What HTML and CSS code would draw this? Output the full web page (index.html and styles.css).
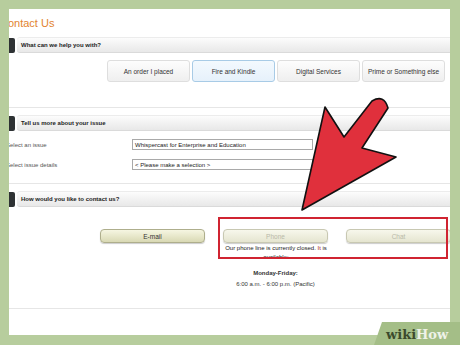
FILE: index.html
```html
<!DOCTYPE html>
<html lang="en">
<head>
    <meta charset="UTF-8">
    <title>Contact Us</title>
    <link rel="stylesheet" href="styles.css">
</head>
<body>
    <div class="page">
        <div class="panel">
            <h1 class="title">Contact Us</h1>

            <!-- Step 1 -->
            <section class="section">
                <div class="section-head"><span class="tab"></span><h2>What can we help you with?</h2></div>
                <div class="topics">
                    <button class="topic">An order I placed</button>
                    <button class="topic selected">Fire and Kindle</button>
                    <button class="topic">Digital Services</button>
                    <button class="topic">Prime or Something else</button>
                </div>
            </section>

            <!-- Step 2 -->
            <section class="section">
                <div class="section-head"><span class="tab"></span><h2>Tell us more about your issue</h2></div>
                <div class="issue-form">
                    <label>Select an issue</label>
                    <div class="select">Whispercast for Enterprise and Education</div>
                    <label>Select issue details</label>
                    <div class="select">&lt; Please make a selection &gt;</div>
                </div>
            </section>

            <!-- Step 3 -->
            <section class="section last">
                <div class="section-head"><span class="tab"></span><h2>How would you like to contact us?</h2></div>
                <div class="contact-options">
                    <div class="option">
                        <button class="contact-btn">E-mail</button>
                    </div>
                    <div class="option">
                        <button class="contact-btn disabled">Phone</button>
                        <p class="note">Our phone line is currently closed. <span class="hl">It</span> is available:</p>
                        <p class="hours"><strong>Monday-Friday:</strong><br>6:00 a.m. - 6:00 p.m. (Pacific)</p>
                    </div>
                    <div class="option">
                        <button class="contact-btn disabled">Chat</button>
                    </div>
                </div>
            </section>
        </div>

        <!-- annotation overlays -->
        <div class="callout"></div>
        <svg class="arrow" width="460" height="345" viewBox="0 0 460 345" aria-hidden="true">
            <path d="M302 210 L325 107 L344 137 L372 101 Q384 94 388 108 L362 148 L396 157 Z" fill="#e0303c" stroke="#111" stroke-width="1.6" stroke-linejoin="round"></path>
        </svg>

        <div class="wikihow">
            <svg class="wikihow-tab" width="86" height="23" viewBox="0 0 86 23" aria-hidden="true">
                <path d="M0 23 L8 0 L86 0 L86 23 Z" fill="#a4be87"></path>
            </svg>
            <span class="wiki">wiki</span><span class="how">How</span>
        </div>
    </div>
</body>
</html>
```

FILE: styles.css
```css
/* Page */
body {
    margin: 0;
    width: 460px;
    height: 345px;
    overflow: hidden;
    background-color: #b7cd9d;
    font-family: "Liberation Sans", Arial, sans-serif;
    color: #333;
}

.page {
    position: relative;
    width: 460px;
    height: 345px;
    padding: 9px 10px 0 9px;
    box-sizing: border-box;
}

/* White panel (cropped on the left) */
.panel {
    height: 326px;
    background-color: #ffffff;
    overflow: hidden;
}

.title {
    margin: 8px 0 0 -9px;
    height: 13px;
    font-size: 11px;
    line-height: 13px;
    font-weight: normal;
    color: #e2832f;
}

/* Sections */
.section {
    border-bottom: 1px solid #e6e6e6;
}

.section-head {
    display: flex;
    height: 16px;
    margin-top: 7px;
}

.tab {
    width: 6px;
    margin-top: 1px;
    background-color: #2e3234;
    border-radius: 0 2px 2px 0;
}

.section-head h2 {
    flex: 1;
    margin: 0 0 0 2px;
    padding-left: 4px;
    font-size: 6px;
    line-height: 14px;
    font-weight: bold;
    color: #222;
    background: linear-gradient(#fcfcfc, #e8e8e8);
    border-top: 1px solid #ececec;
    border-bottom: 1px solid #dadada;
    border-radius: 3px 0 0 3px;
}

/* Step 1 buttons */
.topics {
    display: flex;
    justify-content: flex-end;
    gap: 2px;
    margin-top: 7px;
    padding: 0 5px 25px 0;
}

.topic {
    width: 83px;
    height: 22px;
    padding: 0;
    font-family: inherit;
    font-size: 6.5px;
    color: #333;
    background: linear-gradient(#fdfdfd, #efefef);
    border: 1px solid #dedede;
    border-radius: 3px;
}

.topic.selected {
    background: linear-gradient(#f3f9fe, #e6f1fb);
    border-color: #a8cbe6;
}

/* Step 2 form */
.issue-form {
    display: grid;
    grid-template-columns: 126px 181px;
    row-gap: 9px;
    align-items: center;
    margin: 8px 0 0 -3px;
    padding-bottom: 13px;
}

.issue-form label {
    font-size: 6px;
    color: #555;
}

.select {
    height: 11px;
    padding-left: 2px;
    font-size: 6px;
    line-height: 10px;
    color: #222;
    border: 1px solid #a9a9a9;
    box-sizing: border-box;
    white-space: nowrap;
    overflow: hidden;
}

/* Step 3 contact options */
.contact-options {
    display: flex;
    gap: 18px;
    margin-top: 22px;
    padding: 0 0 18px 91px;
}

.option {
    width: 105px;
    flex-shrink: 0;
    text-align: center;
}

.contact-btn {
    display: block;
    width: 105px;
    height: 14px;
    padding: 0;
    font-family: inherit;
    font-size: 6.5px;
    color: #333;
    background: linear-gradient(#f6f6e2, #d9d9b4);
    border: 1px solid #aeae8c;
    border-radius: 4px;
    box-shadow: 0 1px 1px rgba(0, 0, 0, 0.2);
}

.contact-btn.disabled {
    color: #b9b9a8;
    background: linear-gradient(#f7f7ec, #e5e5d0);
    border-color: #c8c8b2;
}

.note {
    width: 112px;
    margin: 1px 0 0 -3px;
    font-size: 6px;
    line-height: 9px;
    color: #222;
}

.hl {
    color: #a4161f;
}

.hours {
    margin: 6px -20px 0;
    font-size: 6px;
    line-height: 11px;
    color: #333;
}

/* Annotation overlays */
.callout {
    position: absolute;
    left: 218px;
    top: 217px;
    width: 230px;
    height: 42px;
    border: 2px solid #d02431;
    box-sizing: border-box;
}

.arrow {
    position: absolute;
    left: 0;
    top: 0;
}

/* Watermark */
.wikihow {
    position: absolute;
    right: 0;
    bottom: 0;
    z-index: 0;
    width: 86px;
    height: 23px;
    display: flex;
    align-items: flex-end;
    padding: 0 0 2px 12px;
    box-sizing: border-box;
    font-family: "DejaVu Serif", serif;
    font-weight: bold;
    font-size: 13px;
    line-height: 16px;
}

.wikihow-tab {
    position: absolute;
    left: 0;
    top: 0;
    z-index: -1;
}

.wiki {
    color: #3b4a2c;
}

.how {
    color: #eef2e8;
}
```
